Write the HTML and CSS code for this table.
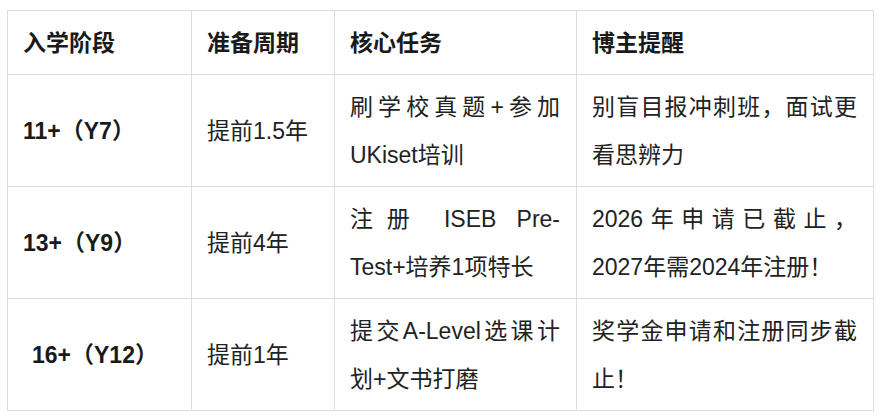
FILE: index.html
```html
<!DOCTYPE html>
<html lang="zh-CN">
<head>
<meta charset="utf-8">
<title>入学阶段</title>
<link rel="stylesheet" href="styles.css">
</head>
<body>
<table class="plan">
  <colgroup>
    <col class="c1"><col class="c2"><col class="c3"><col class="c4">
  </colgroup>
  <thead>
    <tr>
      <th>入学阶段</th>
      <th>准备周期</th>
      <th>核心任务</th>
      <th>博主提醒</th>
    </tr>
  </thead>
  <tbody>
    <tr>
      <td class="stage">11+（Y7）</td>
      <td>提前1.5年</td>
      <td><span class="ln jl">刷学校真题+参加</span><span class="ln">UKiset培训</span></td>
      <td><span class="ln jl">别盲目报冲刺班，面试更</span><span class="ln">看思辨力</span></td>
    </tr>
    <tr>
      <td class="stage">13+（Y9）</td>
      <td>提前4年</td>
      <td><span class="ln jl">注册 ISEB Pre-</span><span class="ln">Test+培养1项特长</span></td>
      <td><span class="ln jl">2026年申请已截止，</span><span class="ln">2027年需2024年注册！</span></td>
    </tr>
    <tr>
      <td class="stage indent">16+（Y12）</td>
      <td>提前1年</td>
      <td><span class="ln jl">提交A-Level选课计</span><span class="ln">划+文书打磨</span></td>
      <td><span class="ln jl">奖学金申请和注册同步截</span><span class="ln">止！</span></td>
    </tr>
  </tbody>
</table>
</body>
</html>
```

FILE: styles.css
```css
html, body {
  margin: 0;
  padding: 0;
  background: #ffffff;
}

body {
  padding: 10px 0 0 7px;
  font-family: "Liberation Sans", "Noto Sans CJK SC", sans-serif;
  font-size: 23px;
  color: #222222;
}

.plan {
  border-collapse: collapse;
  table-layout: fixed;
  width: 866px;
}

.c1 { width: 184px; }
.c2 { width: 143px; }
.c3 { width: 242px; }
.c4 { width: 297px; }

.plan th,
.plan td {
  border: 1px solid #dedede;
  padding: 8px 16px 7px 15px;
  line-height: 48px;
  text-align: left;
  vertical-align: middle;
}

.plan th {
  font-weight: 700;
  color: #1a1a1a;
}

.plan td.stage {
  font-weight: 700;
  color: #1a1a1a;
}

.plan td.indent {
  padding-left: 24px;
}

.ln {
  display: block;
  white-space: nowrap;
}

.ln.jl {
  text-align: justify;
  text-align-last: justify;
}
```
